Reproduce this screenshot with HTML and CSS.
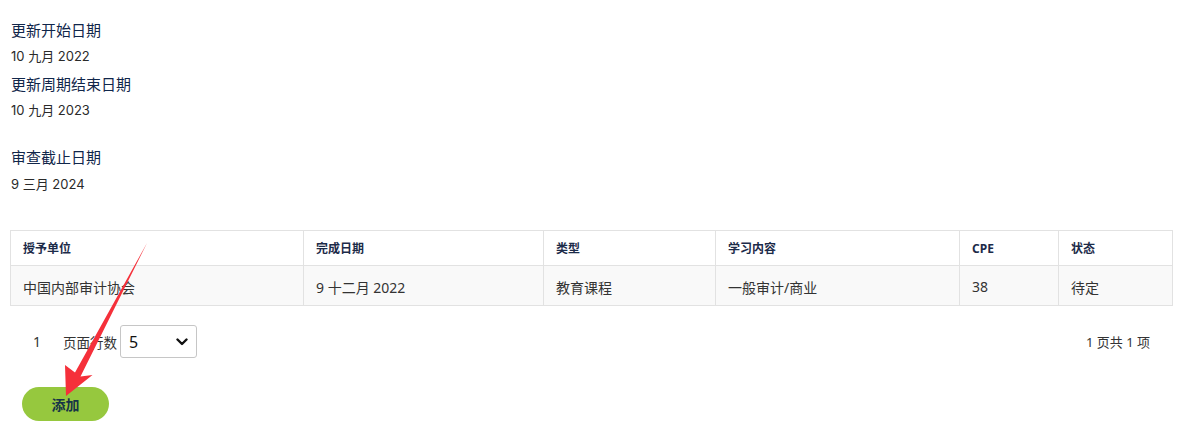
FILE: index.html
```html
<!DOCTYPE html>
<html lang="zh">
<head>
<meta charset="utf-8">
<title>CPE</title>
<link rel="stylesheet" href="styles.css">
</head>
<body>
<div class="page">
  <div class="details">
    <div class="label">更新开始日期</div>
    <div class="value">10 九月 2022</div>
    <div class="label">更新周期结束日期</div>
    <div class="value">10 九月 2023</div>
    <div class="spacer"></div>
    <div class="label">审查截止日期</div>
    <div class="value v-last">9 三月 2024</div>
  </div>

  <table class="grid">
    <colgroup>
      <col class="c1"><col class="c2"><col class="c3"><col class="c4"><col class="c5"><col class="c6">
    </colgroup>
    <thead>
      <tr><th>授予单位</th><th>完成日期</th><th>类型</th><th>学习内容</th><th>CPE</th><th>状态</th></tr>
    </thead>
    <tbody>
      <tr><td>中国内部审计协会</td><td>9 十二月 2022</td><td>教育课程</td><td>一般审计/商业</td><td>38</td><td>待定</td></tr>
    </tbody>
  </table>

  <div class="pager">
    <div class="pager-left">
      <span class="page-num">1</span>
      <span class="rows-label">页面行数</span>
      <div class="select-wrap">
        <select class="rows-select"><option>5</option></select>
        <svg class="chev" width="12" height="8" viewBox="0 0 12 8"><path d="M1.5 1.5 L6 6 L10.5 1.5" fill="none" stroke="#111" stroke-width="2.4" stroke-linecap="round" stroke-linejoin="round"/></svg>
      </div>
    </div>
    <div class="pager-right">1 页共 1 项</div>
  </div>

  <button class="add-btn">添加</button>
</div>

<svg class="annot" width="1181" height="426" viewBox="0 0 1181 426">
  <polygon points="147,243 80.5,376.5 92.5,375 66,396 65,365 75,372.5" fill="#f5303a"/>
</svg>
</body>
</html>
```

FILE: styles.css
```css
html, body {
  margin: 0;
  padding: 0;
  background: #ffffff;
}
body {
  font-family: "Noto Sans", "Noto Sans CJK SC", sans-serif;
  color: #333;
  position: relative;
  width: 1181px;
  height: 426px;
  overflow: hidden;
}
.page {
  padding: 18px 9px 0 10px;
}
.details {
  padding-left: 1px;
}
.label {
  font-family: "Noto Sans CJK SC", sans-serif;
  font-size: 15px;
  line-height: 25px;
  color: #10264a;
  margin-top: -1px;
  padding-bottom: 1px;
}
.value {
  font-family: Inter, "Noto Sans CJK SC", sans-serif;
  font-size: 13px;
  line-height: 25px;
  color: #2a2a2a;
  margin-bottom: 4px;
  padding-top: 1px;
  height: 24px;
}
.v-last {
  padding-top: 2px;
  height: 23px;
}
.spacer {
  height: 19px;
}
.grid {
  margin-top: 35px;
  width: 1162px;
  border-collapse: collapse;
  table-layout: fixed;
}
.c1 { width: 293px; }
.c2 { width: 240px; }
.c3 { width: 172px; }
.c4 { width: 244px; }
.c5 { width: 99px; }
.c6 { width: 114px; }
.grid th, .grid td {
  border: 1px solid #e2e2e2;
  text-align: left;
  padding: 0 12px;
  font-family: "Noto Sans", "Noto Sans CJK SC", sans-serif;
}
.grid th {
  height: 34px;
  font-size: 12px;
  font-weight: 700;
  color: #1c2b49;
  background: #ffffff;
}
.grid td {
  height: 37px;
  padding-top: 2px;
  font-size: 14px;
  color: #333;
  background: #f9f9f9;
}
.pager {
  margin-top: 19px;
  display: flex;
  justify-content: space-between;
  align-items: center;
  height: 33px;
}
.pager-left {
  display: flex;
  align-items: center;
  padding-left: 23px;
  font-size: 14px;
  color: #333;
}
.page-num {
  width: 30px;
}
.rows-label {
  font-size: 13.5px;
  margin-right: 3px;
}
.select-wrap {
  position: relative;
  width: 77px;
  height: 33px;
}
.rows-select {
  -webkit-appearance: none;
  appearance: none;
  width: 77px;
  height: 33px;
  border: 1px solid #c6c6c6;
  border-radius: 3px;
  background: #fff;
  font-family: "Noto Sans", sans-serif;
  font-size: 16px;
  color: #111;
  padding: 0 0 0 8px;
  margin: 0;
  box-sizing: border-box;
}
.chev {
  position: absolute;
  right: 9px;
  top: 13px;
  pointer-events: none;
}
.pager-right {
  font-size: 13px;
  color: #333;
  padding-right: 22px;
}
.add-btn {
  margin-top: 29px;
  margin-left: 12px;
  width: 87px;
  height: 34px;
  border: none;
  border-radius: 17px;
  background: #96c83e;
  color: #173447;
  font-family: "Noto Sans CJK SC", sans-serif;
  font-size: 14px;
  font-weight: 700;
  padding: 0;
}
.annot {
  position: absolute;
  left: 0;
  top: 0;
  pointer-events: none;
}
```
